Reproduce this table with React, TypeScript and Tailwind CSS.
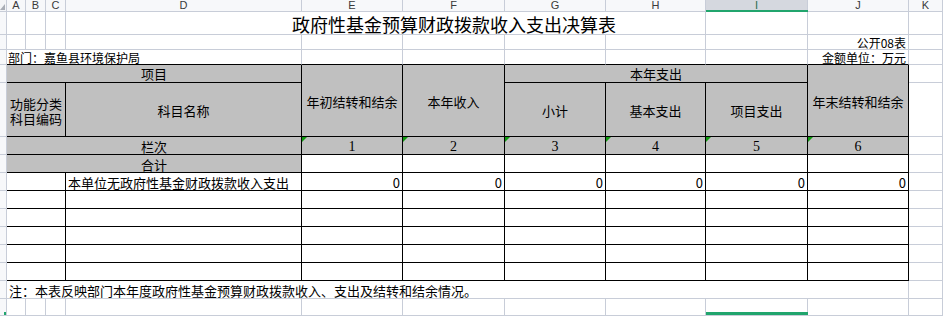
import React from "react";

// Literal class lookups so every grid placement class exists in the stylesheet.
const COL: Record<number, string> = {
  1: "col-start-1",
  2: "col-start-2",
  3: "col-start-3",
  4: "col-start-4",
  5: "col-start-5",
  6: "col-start-6",
  7: "col-start-7",
  8: "col-start-8",
  9: "col-start-9",
  10: "col-start-10",
  11: "col-start-11",
  12: "col-start-12",
};
const ROW: Record<number, string> = {
  1: "row-start-1",
  2: "row-start-2",
  3: "row-start-3",
  4: "row-start-4",
  5: "row-start-5",
  6: "row-start-6",
  7: "row-start-7",
  8: "row-start-8",
  9: "row-start-9",
  10: "row-start-10",
  11: "row-start-11",
  12: "row-start-12",
  13: "row-start-13",
  14: "row-start-14",
  15: "row-start-15",
  16: "row-start-16",
};
const COL_SPAN: Record<number, string> = {
  1: "",
  3: "col-span-3",
  4: "col-span-4",
  5: "col-span-5",
  10: "col-span-10",
};
const ROW_SPAN: Record<number, string> = { 1: "", 2: "row-span-2" };

const GRID = "border-r border-b border-[#c8cdd8]";
const INK = "border-r border-b border-black";

type CellProps = {
  c: number;
  r: number;
  cs?: number;
  rs?: number;
  className?: string;
  children?: React.ReactNode;
};

function Cell({ c, r, cs = 1, rs = 1, className = "", children }: CellProps) {
  return (
    <div
      className={`relative flex min-w-0 overflow-visible ${COL[c]} ${ROW[r]} ${COL_SPAN[cs]} ${ROW_SPAN[rs]} ${className}`}
    >
      {children}
    </div>
  );
}

// Small green "number stored as text" marker in a cell corner.
function Flag() {
  return (
    <svg className="absolute left-0 top-0" width="5" height="5" viewBox="0 0 5 5">
      <polygon points="0,0 5,0 0,5" fill="#109b10" />
    </svg>
  );
}

const LETTERS = ["A", "B", "C", "D", "E", "F", "G", "H", "I", "J", "K"];
const VALUE_COLS = [6, 7, 8, 9, 10, 11];
const BLANK_ROWS = [10, 11, 12, 13, 14];

export default function App() {
  return (
    <div className="h-[316px] w-[943px] overflow-hidden bg-white font-['Noto_Sans_CJK_SC',sans-serif] text-black">
      <div className="grid h-full w-full grid-cols-[7px_19px_20px_20px_236px_101px_102px_101px_100px_102px_101px_1fr] grid-rows-[12px_23px_15px_15px_18px_54px_18px_18px_18px_18px_18px_18px_18px_18px_18px_17px]">
        {/* corner */}
        <Cell c={1} r={1} className={`${GRID} bg-[#f4f5f7]`}>
          <svg className="absolute bottom-[1px] right-[1px]" width="5" height="6" viewBox="0 0 5 6">
            <polygon points="5,0 5,6 0,6" fill="#a9adb5" />
          </svg>
        </Cell>

        {/* column letters */}
        {LETTERS.map((l, i) =>
          l === "I" ? (
            <Cell
              key={l}
              c={i + 2}
              r={1}
              className={`${GRID} items-center justify-center bg-[#d5d8df] font-['Liberation_Sans',sans-serif] text-[11px] leading-[11px] text-[#2a6e4c]`}
            >
              {l}
              <div className="absolute bottom-[-1px] left-0 right-[-1px] h-[2px] bg-[#21a56d]" />
            </Cell>
          ) : (
            <Cell
              key={l}
              c={i + 2}
              r={1}
              className={`${GRID} items-center justify-center bg-[#f7f8fa] font-['Liberation_Sans',sans-serif] text-[11px] leading-[11px] text-[#3a3a3a]`}
            >
              {l}
            </Cell>
          )
        )}

        {/* row header strip */}
        {[2, 3, 4, 5, 6, 7, 8, 9, 10, 11, 12, 13, 14, 15, 16].map((r) => (
          <Cell key={`rh${r}`} c={1} r={r} className={`${GRID} bg-[#f7f8fa]`}>
            {r === 16 && <div className="absolute bottom-0 left-[4px] h-[3px] w-[2px] bg-[#21a56d]" />}
          </Cell>
        ))}

        {/* row 1: title */}
        <Cell c={2} r={2} className={GRID} />
        <Cell c={3} r={2} className={GRID} />
        <Cell c={4} r={2} className={GRID} />
        <Cell c={5} r={2} cs={5} className={`${GRID} items-end pb-[1px] pl-[226px]`}>
          <span className="whitespace-nowrap text-[18px] leading-[18px]">
            政府性基金预算财政拨款收入支出决算表
          </span>
        </Cell>
        <Cell c={10} r={2} className={GRID} />
        <Cell c={11} r={2} className={GRID} />
        <Cell c={12} r={2} className={GRID} />

        {/* row 2 */}
        {[2, 3, 4, 5, 6, 7, 8, 9, 10, 12].map((c) => (
          <Cell key={`r2${c}`} c={c} r={3} className={GRID} />
        ))}
        <Cell c={11} r={3} className={`${GRID} items-end justify-end pr-[2px]`}>
          <span className="whitespace-nowrap text-[12px] leading-[12px]">公开08表</span>
        </Cell>

        {/* row 3: department and unit */}
        <Cell c={2} r={4} cs={4} className="items-end border-r border-b border-r-[#c8cdd8] border-b-black pl-[1px]">
          <span className="whitespace-nowrap text-[12px] leading-[12px]">部门：嘉鱼县环境保护局</span>
        </Cell>
        {[6, 7, 8, 9, 10].map((c) => (
          <Cell key={`r3${c}`} c={c} r={4} className="border-r border-b border-r-[#c8cdd8] border-b-black" />
        ))}
        <Cell c={11} r={4} className="items-end justify-end border-r border-b border-r-[#c8cdd8] border-b-black pr-[2px]">
          <span className="whitespace-nowrap text-[12px] leading-[12px]">金额单位：万元</span>
        </Cell>
        <Cell c={12} r={4} className={GRID} />

        {/* header rows */}
        <Cell c={2} r={5} cs={4} className={`${INK} items-center justify-center bg-[#c0c0c0] text-[13px] leading-none`}>
          项目
        </Cell>
        <Cell c={6} r={5} rs={2} className={`${INK} items-center justify-center bg-[#c0c0c0] pt-[2px] text-[13px] leading-none`}>
          年初结转和结余
        </Cell>
        <Cell c={7} r={5} rs={2} className={`${INK} items-center justify-center bg-[#c0c0c0] pt-[2px] text-[13px] leading-none`}>
          本年收入
        </Cell>
        <Cell c={8} r={5} cs={3} className={`${INK} items-center justify-center bg-[#c0c0c0] text-[13px] leading-none`}>
          本年支出
        </Cell>
        <Cell c={11} r={5} rs={2} className={`${INK} items-center justify-center bg-[#c0c0c0] pt-[2px] text-[13px] leading-none`}>
          年末结转和结余
        </Cell>
        <Cell c={12} r={5} className={GRID} />

        <Cell c={2} r={6} cs={3} className={`${INK} flex-col items-center justify-center gap-[2px] bg-[#c0c0c0] pt-[2px] text-[13px] leading-[13px]`}>
          <span>功能分类</span>
          <span>科目编码</span>
        </Cell>
        <Cell c={5} r={6} className={`${INK} items-center justify-center bg-[#c0c0c0] pt-[2px] text-[13px] leading-none`}>
          科目名称
        </Cell>
        <Cell c={8} r={6} className={`${INK} items-center justify-center bg-[#c0c0c0] pt-[2px] text-[13px] leading-none`}>
          小计
        </Cell>
        <Cell c={9} r={6} className={`${INK} items-center justify-center bg-[#c0c0c0] pt-[2px] text-[13px] leading-none`}>
          基本支出
        </Cell>
        <Cell c={10} r={6} className={`${INK} items-center justify-center bg-[#c0c0c0] pt-[2px] text-[13px] leading-none`}>
          项目支出
        </Cell>
        <Cell c={12} r={6} className={GRID} />

        {/* 栏次 */}
        <Cell c={2} r={7} cs={4} className={`${INK} items-center justify-center bg-[#c0c0c0] pt-[1px] text-[13px] leading-none`}>
          栏次
        </Cell>
        {VALUE_COLS.map((c, i) => (
          <Cell
            key={`no${c}`}
            c={c}
            r={7}
            className={`${INK} items-center justify-center bg-[#c0c0c0] pt-[2px] font-['Liberation_Serif',serif] text-[14px] leading-none`}
          >
            <Flag />
            {i + 1}
          </Cell>
        ))}
        <Cell c={12} r={7} className={GRID} />

        {/* 合计 */}
        <Cell c={2} r={8} cs={4} className={`${INK} items-center justify-center bg-[#c0c0c0] pt-[1px] text-[13px] leading-none`}>
          合计
        </Cell>
        {VALUE_COLS.map((c) => (
          <Cell key={`sum${c}`} c={c} r={8} className={INK} />
        ))}
        <Cell c={12} r={8} className={GRID} />

        {/* data row */}
        <Cell c={2} r={9} cs={3} className={INK} />
        <Cell c={5} r={9} className={`${INK} items-center pl-[2px] pt-[1px] text-[13px] leading-none`}>
          <span className="whitespace-nowrap">本单位无政府性基金财政拨款收入支出</span>
        </Cell>
        {VALUE_COLS.map((c) => (
          <Cell key={`v${c}`} c={c} r={9} className={`${INK} items-center justify-end pr-[2px] pt-[2px] text-[13px] leading-none`}>
            0
          </Cell>
        ))}
        <Cell c={12} r={9} className={GRID} />

        {/* blank rows */}
        {BLANK_ROWS.map((r) => (
          <React.Fragment key={`b${r}`}>
            <Cell c={2} r={r} cs={3} className={INK} />
            <Cell c={5} r={r} className={INK} />
            {VALUE_COLS.map((c) => (
              <Cell key={`b${r}-${c}`} c={c} r={r} className={INK} />
            ))}
            <Cell c={12} r={r} className={GRID} />
          </React.Fragment>
        ))}

        {/* note */}
        <Cell c={2} r={15} cs={10} className={`${GRID} items-center pl-[2px] pt-[1px] text-[13px] leading-none`}>
          <span className="whitespace-nowrap">
            注：本表反映部门本年度政府性基金预算财政拨款收入、支出及结转和结余情况。
          </span>
        </Cell>
        <Cell c={12} r={15} className={GRID} />

        {/* last visible row */}
        {[2, 3, 4, 5, 6, 7, 8, 9, 11, 12].map((c) => (
          <Cell key={`l${c}`} c={c} r={16} className={GRID} />
        ))}
        <Cell c={10} r={16} className={GRID}>
          <div className="absolute bottom-0 left-0 right-[-1px] h-[3px] bg-[#21a56d]" />
        </Cell>
      </div>
    </div>
  );
}
